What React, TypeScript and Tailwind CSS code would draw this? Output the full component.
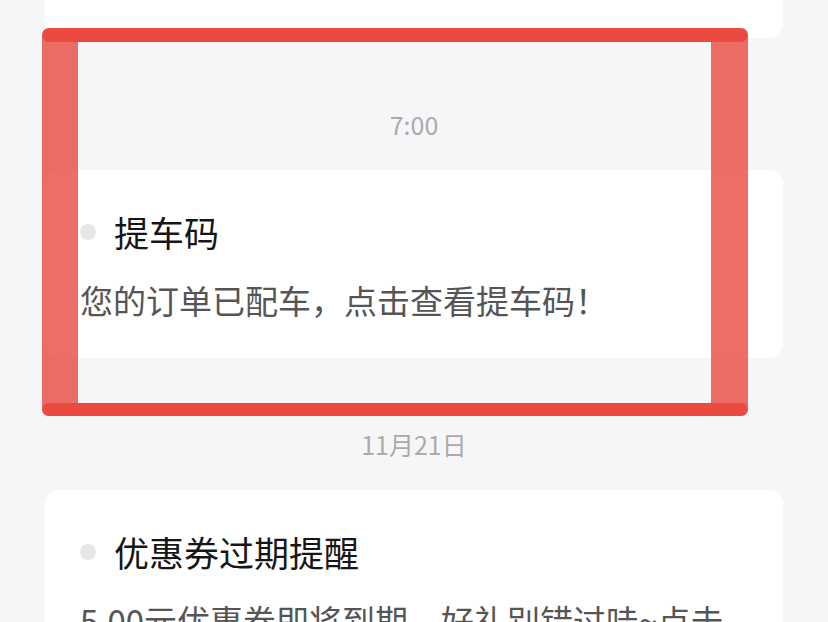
const font = { fontFamily: '"Noto Sans CJK SC", "Noto Sans", sans-serif' };

interface NoticeProps {
	title: string;
	body: string;
}

function Notice({ title, body }: NoticeProps) {
	return (
		<div className="bg-white rounded-[14px] pl-[35px] pr-[35px] pt-[40px] pb-[36px]">
			<div className="flex items-center h-[44px]">
				<span className="w-[16px] h-[16px] rounded-full bg-[#e6e6e8] shrink-0" />
				<h3 className="ml-[18px] text-[35px] leading-[44px] text-[#161616]">{title}</h3>
			</div>
			<p className="mt-[24px] text-[33px] leading-[44px] text-[#555555]">{body}</p>
		</div>
	);
}

function TimeLabel({ text }: { text: string }) {
	return (
		<div className="pt-[66px] pb-[26px] text-center text-[25px] leading-[40px] text-[#ababab]">
			{text}
		</div>
	);
}

export default function App() {
	return (
		<div className="relative w-[828px] h-[622px] overflow-hidden bg-[#f6f6f9]" style={font}>
			<div className="px-[45px]">
				<div className="h-[38px] bg-white rounded-b-[14px]" />
				<TimeLabel text="7:00" />
				<Notice title="提车码" body="您的订单已配车，点击查看提车码！" />
				<TimeLabel text="11月21日" />
				<Notice title="优惠券过期提醒" body="5.00元优惠券即将到期，好礼别错过哇~点击查看详情" />
			</div>

			{/* annotation box drawn over the screenshot */}
			<svg className="absolute left-[42px] top-[28px]" width="706" height="388" viewBox="0 0 706 388">
				<rect x="0" y="0" width="36" height="388" rx="10" fill="#e8453b" fillOpacity="0.78" />
				<rect x="669" y="0" width="37" height="388" rx="10" fill="#e8453b" fillOpacity="0.78" />
				<rect x="0" y="0" width="706" height="14" rx="7" fill="#ea4a3f" />
				<rect x="0" y="375" width="706" height="13" rx="6.5" fill="#ea4a3f" />
			</svg>
		</div>
	);
}
